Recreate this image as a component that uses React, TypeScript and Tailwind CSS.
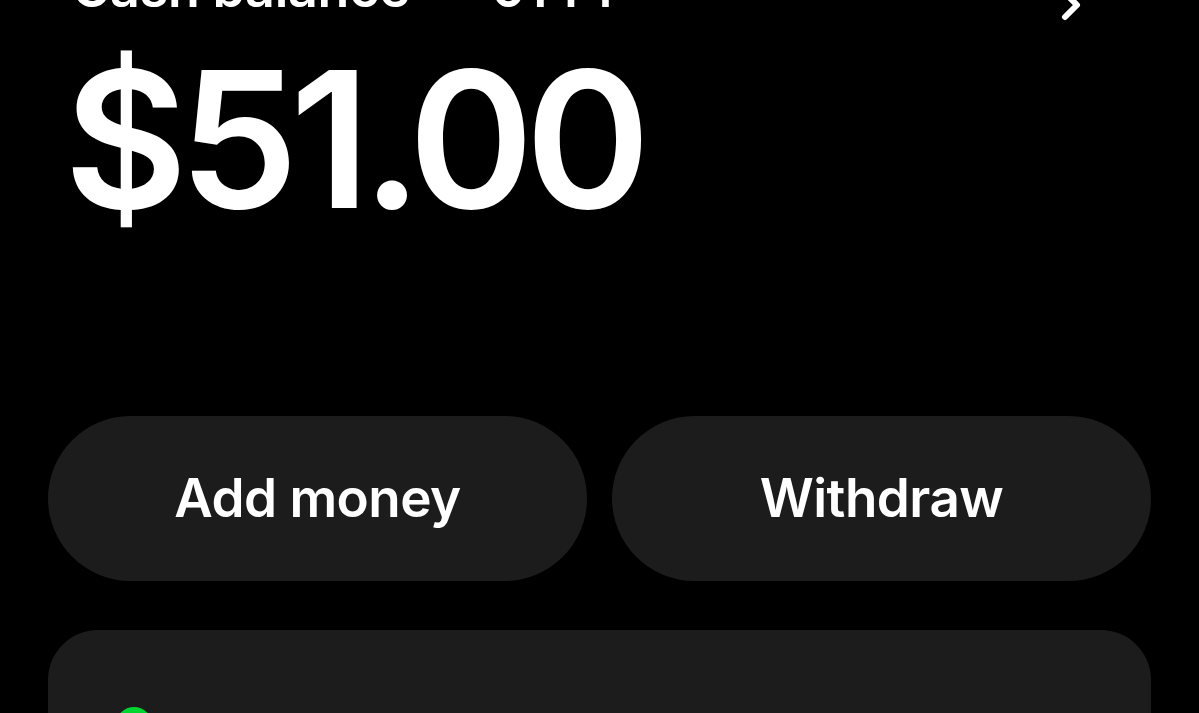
import { ChevronRight } from "lucide-react"

export default function App() {
  return (
    <div className="min-h-screen bg-black overflow-hidden font-['Inter','Noto_Sans',sans-serif] text-white">
      <div className="px-12">
        {/* balance header, scrolled partly out of view */}
        <div className="mt-[-37px] flex h-[52px] items-center justify-between pl-[24px] pr-[56px]">
          <div className="flex items-center gap-[30px] text-[52px] font-semibold leading-none tracking-[-0.005em]">
            <span>Cash balance</span>
            <span className="text-[22px] text-[#8a8a8a]">••</span>
            <span>0144</span>
          </div>
          <ChevronRight className="mt-[16px] mb-[-16px] h-[48px] w-[48px]" strokeWidth={3} />
        </div>

        <div className="mt-[29px] pl-[16px] text-[190px] font-semibold leading-none tracking-[-0.045em]">
          $51.00
        </div>

        <div className="mt-[182px] grid grid-cols-2 gap-[25px]">
          <button className="h-[165px] rounded-full bg-[#1c1c1c] text-[53px] font-semibold tracking-[-0.01em]">
            Add money
          </button>
          <button className="h-[165px] rounded-full bg-[#1c1c1c] text-[53px] font-semibold tracking-[-0.01em]">
            Withdraw
          </button>
        </div>

        <div className="mt-[49px] h-[300px] rounded-[50px] bg-[#1c1c1c] pl-[68px] pt-[77px]">
          <div className="h-[36px] w-[36px] rounded-full bg-[#00d632]" />
        </div>
      </div>
    </div>
  )
}
